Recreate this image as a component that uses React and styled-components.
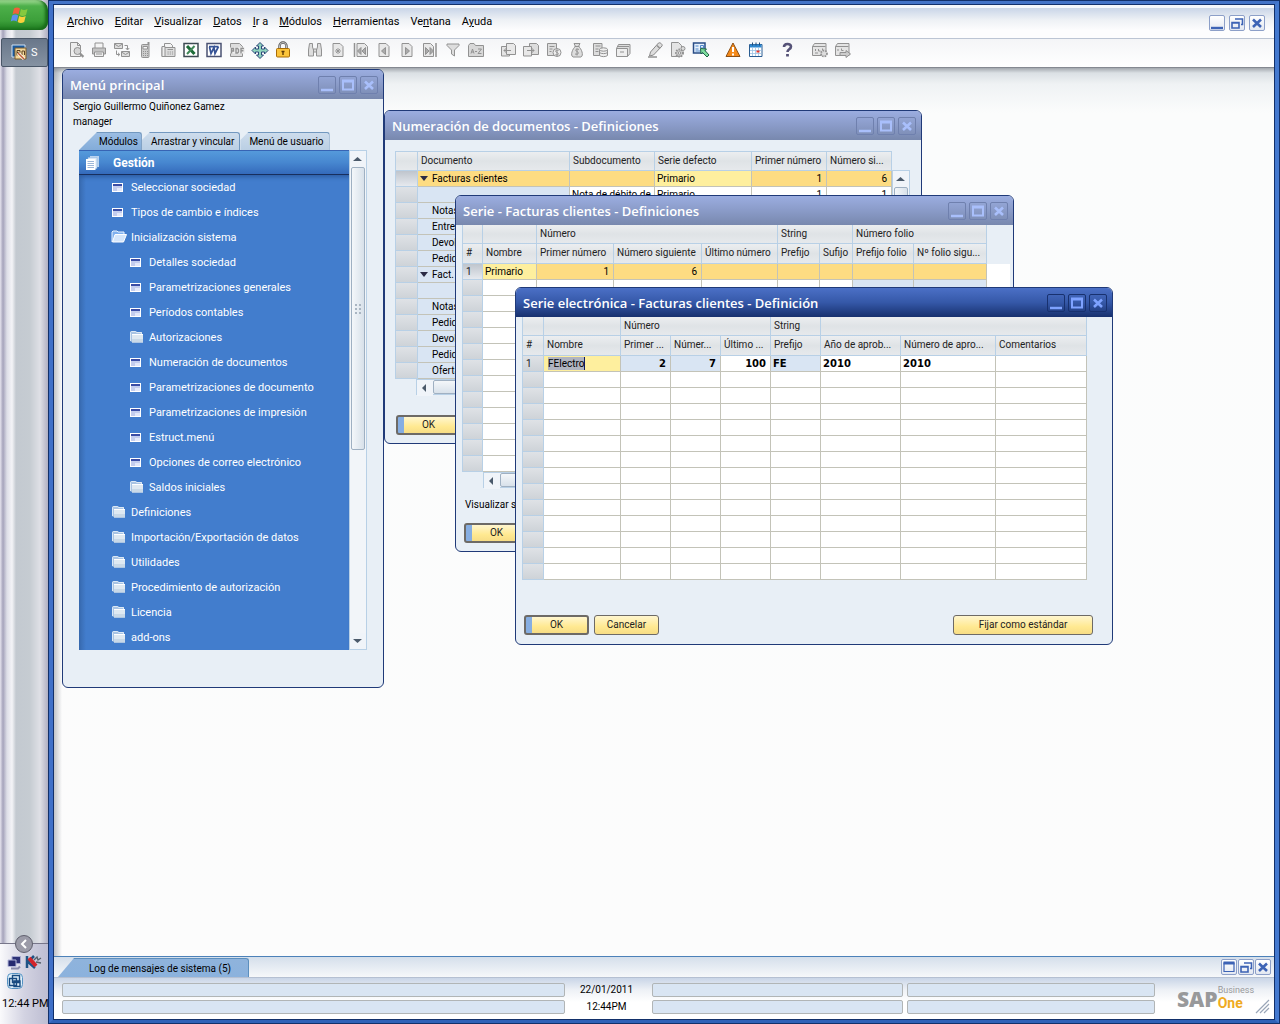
import React,{useState} from 'react'
import styled,{createGlobalStyle,css} from 'styled-components'

const ui='Roboto,"Noto Sans",sans-serif'

//menu bar, u is the index of the underlined letter
const menus=[
    {text:"Archivo",u:0},
    {text:"Editar",u:0},
    {text:"Visualizar",u:0},
    {text:"Datos",u:0},
    {text:"Ir a",u:0},
    {text:"Módulos",u:0},
    {text:"Herramientas",u:0},
    {text:"Ventana",u:2},
    {text:"Ayuda",u:1},
]

const toolGroups=[
    [["preview","Vista preliminar"],["print","Imprimir"],["mail","Correo"],["sms","SMS"],["fax","Fax"],["excel","Excel"],["word","Word"],["pdf","PDF"],["move","Iniciar aplicación"],["lock","Bloquear"]],
    [["find","Buscar"],["add","Crear"],["first","Primero"],["prev","Anterior"],["next","Siguiente"],["last","Último"],["filter","Filtrar"],["sort","Clasificar"]],
    [["base","Documento base"],["target","Documento destino"],["gross","Ganancia bruta"],["money","Medios de pago"],["volume","Volumen"],["drawer","Asiento"]],
    [["pencil","Editar"],["formset","Parametrizar formulario"],["query","Consultas"]],
    [["alert","Alertas"],["calendar","Calendario"]],
    [["help","Ayuda"]],
    [["layout","Diseño"],["layoutgo","Exportar diseño"]],
]

const tree=[
    {text:"Seleccionar sociedad",icon:"form",level:1},
    {text:"Tipos de cambio e índices",icon:"form",level:1},
    {text:"Inicialización sistema",icon:"open",level:1},
    {text:"Detalles sociedad",icon:"form",level:2},
    {text:"Parametrizaciones generales",icon:"form",level:2},
    {text:"Períodos contables",icon:"form",level:2},
    {text:"Autorizaciones",icon:"folder",level:2},
    {text:"Numeración de documentos",icon:"form",level:2},
    {text:"Parametrizaciones de documento",icon:"form",level:2},
    {text:"Parametrizaciones de impresión",icon:"form",level:2},
    {text:"Estruct.menú",icon:"form",level:2},
    {text:"Opciones de correo electrónico",icon:"form",level:2},
    {text:"Saldos iniciales",icon:"folder",level:2},
    {text:"Definiciones",icon:"folder",level:1},
    {text:"Importación/Exportación de datos",icon:"folder",level:1},
    {text:"Utilidades",icon:"folder",level:1},
    {text:"Procedimiento de autorización",icon:"folder",level:1},
    {text:"Licencia",icon:"folder",level:1},
    {text:"add-ons",icon:"folder",level:1},
]

const documents=["Notas","Entreg.","Devol.","Pedido","Fact.","","Notas","Pedido","Devol.","Pedido","Oferta"]

const blank=(n)=>Array.from({length:n},(_,i)=>i)

//---------- icons ----------
const page="M4 2.5h7l3 3v10h-10z"

const glyphs={
    preview:<><path d="M3.500 1.500h7l3 3v11h-10z" fill="#eee"/><path d="M10.500 1.500v3h3"/><circle cx="10.500" cy="10" r="3.500" fill="#d4d4d4"/><path d="M13 12.500l3.400 3.400" strokeWidth="2.200"/></>,
    print:<><path d="M5 7V2h8V7"  fill="#f4f4f4"/><path d="M2.500 7h13v6h-13z" fill="#c4c4c4"/><path d="M4.500 11h9v4.500h-9z" fill="#eee"/><path d="M6 13h6"/></>,
    mail:<><path d="M1.500 2.500h8v5h-8zM8.500 10.500h8v5h-8z" fill="#ddd"/><path d="M1.500 3l4 2.500 4-2.500M8.500 11l4 2.500 4-2.500M11.500 4.500h3v4M12.800 7l1.700 2 1.700-2M3.500 9.500v4h3M5 11.800l1.800 1.700-1.800 1.700"/></>,
    sms:<><path d="M12.500 1v3" strokeWidth="2"/><rect x="5.500" y="3.500" width="7.500" height="13" rx="1" fill="#ccc"/><path d="M7 5.500h4.500v2.500h-4.500z" fill="#f6f6f6"/><path d="M7 10.500h5M7 12.500h5M7 14.500h5" strokeDasharray="1 1"/></>,
    fax:<><path d="M5.500 6v-3.500h6l2 2v2" fill="#f4f4f4"/><path d="M3 6.500h13v9h-13z" fill="#ddd"/><path d="M3 5.500h3v10h-3z" fill="#eee"/><path d="M8.500 8.500h5.500"/><path d="M8.500 11h6M8.500 13h6" strokeDasharray="1.200 1"/></>,
    excel:<><path d="M2 2.500h14v13h-14z" fill="#fff" stroke="#3c4a52" strokeWidth="1.500"/><path d="M5 5l7.500 8" stroke="#1c6b37" strokeWidth="3"/><path d="M12.500 5l-7.500 8" stroke="#3f8757" strokeWidth="2"/></>,
    word:<><path d="M2 2.500h14v13h-14z" fill="#fff" stroke="#4a5272" strokeWidth="1.500"/><path d="M4.500 6l1.500 6.500 3-6 1 6 3.500-7M4 5.700h9.500" stroke="#365395" strokeWidth="1.700"/></>,
    pdf:<><path d="M2.500 2.500h9l3 3v10h-12z" fill="#ddd"/><path d="M2 6.500h15v6h-15z" fill="#eee" stroke="none"/><path d="M3.500 12.500v-5h2v2.500h-2M8 7.500v4.500h1.500l1-1v-2.500l-1-1zM13 12.500v-5h3M13 9.800h2.500" strokeWidth="1.400"/></>,
    move:<><path d="M9 1.500l3.500 3.500h-2v3h3v-2l3.500 3.500-3.500 3.500v-2h-3v3h2l-3.500 3.500-3.500-3.500h2v-3h-3v2l-3.500-3.500 3.500-3.500v2h3v-3h-2z" fill="#8fd3bd" stroke="#2b4778"/></>,
    lock:<><path d="M5.500 8v-3a3.500 3.500 0 0 1 7 0v3" stroke="#555" strokeWidth="2.400"/><path d="M5.500 8v-3a3.500 3.500 0 0 1 7 0v3" stroke="#ddd" strokeWidth="0.800"/><rect x="2.500" y="7.500" width="13" height="8.500" rx="1" fill="#fcc43a" stroke="#a96c06"/><path d="M9 10v4M7.500 10.500h3" stroke="#5e3a05" strokeWidth="1.400"/></>,
    find:<><path d="M3.500 2.500h3v3.500l1 3v6h-5v-6zM11.500 2.500h3l1 6.500v6h-5v-6l1-3zM7.500 8h3v3h-3z" fill="#ddd"/></>,
    add:<><path d={page} fill="#e8e8e8"/><path d="M9 7v6M6 10h6M7 8l4 4M11 8l-4 4" strokeWidth="0.900"/></>,
    first:<><path d="M5 2.500h7.500l3 3v10h-10.500z" fill="#e8e8e8"/><path d="M2.500 2v14" strokeWidth="1.500"/><path d="M9 6.500v7l-3.500-3.500zM13.500 6.500v7l-3.500-3.500z" fill="#aaa"/></>,
    prev:<><path d={page} fill="#e8e8e8"/><path d="M10.500 6.500v7l-4-3.500z" fill="#aaa"/></>,
    next:<><path d={page} fill="#e8e8e8"/><path d="M7.500 6.500v7l4-3.500z" fill="#aaa"/></>,
    last:<><path d="M2.500 2.500h7l3 3v10h-10z" fill="#e8e8e8"/><path d="M15 2v14" strokeWidth="1.500"/><path d="M4.500 6.500v7l3.500-3.500zM9 6.500v7l3.500-3.500z" fill="#aaa"/></>,
    filter:<path d="M3 3h12v1.500l-4.500 4.500v6l-3-2v-4l-4.500-4.500z" fill="#ddd"/>,
    sort:<><path d="M1.500 15.500v-11l1.500-2h4l1.500 2h8v11z" fill="#d8d8d8"/><path d="M4 12.500l1.500-4.500 1.500 4.500M4.500 11h2M8 10.500h2M11 8h3.500l-3.500 4.500h3.500"/></>,
    base:<><path d="M2.500 5.500h8v9.500h-8z" fill="#e4e4e4"/><path d="M7.500 2.500h7l2 2v9h-9z" fill="#e8e8e8"/><path d="M12 9.500h-7M7.500 7l-2.500 2.500 2.500 2.500"/></>,
    target:<><path d="M7.500 2.500h7l2 2v9h-9z" fill="#ddd"/><path d="M1.500 5.500h8v9.500h-8z" fill="#e8e8e8"/><path d="M5 9.500h7M9.500 7l2.500 2.500-2.500 2.500"/></>,
    gross:<><path d="M2.500 2.500h9v12h-9z" fill="#ddd"/><path d="M4.500 5.500h5M4.500 8h3M4.500 10.500h2"/><circle cx="12" cy="11.500" r="4" fill="#eee"/><path d="M13.500 9.500c-3-1-4 1-1.500 2s1.500 3-1.500 2M12 8.500v6.500"/></>,
    money:<><path d="M6 2.500h6l-1.500 3c3 2 5.500 9 2.500 10.500h-8c-3-1.500-.5-8.500 2.500-10.500z" fill="#ddd"/><path d="M11 8.500c-3-1.500-4.500 1-2 2s1.500 3.500-2 2.500M9 7.500v7M6.500 5.500h5"/></>,
    volume:<><path d="M2.500 2.500h8.500v12h-8.500z" fill="#ddd"/><path d="M4.500 5h5M4.500 8h3M4.500 10.500h3"/><path d="M8.500 8.500v6c1.500 1.500 6.500 1.500 8 0v-6" fill="#eee"/><ellipse cx="12.500" cy="8.500" rx="4" ry="1.700" fill="#eee"/><path d="M8.500 11.500c1.500 1.500 6.500 1.500 8 0"/></>,
    drawer:<><path d="M2.500 7.500l2-4h11.500v9l-2.500 3z" fill="#ddd"/><path d="M2.500 7.500h11v8h-11z" fill="#eee"/><path d="M4 5.500h11M6 11h4"/></>,
    pencil:<><path d="M4.500 11l8-9c1.500-1 4.500 1.500 3.500 3l-8.500 9-4 1z" fill="#ddd" stroke="#888"/><path d="M11 4.500l3 3M2 16h9" strokeWidth="1.500"/></>,
    formset:<><path d="M2.500 1.500h7l3 3v11h-10z" fill="#e4e4e4"/><circle cx="10.500" cy="12" r="3.500" fill="#ccc" strokeDasharray="1.500 1" strokeWidth="2"/><circle cx="10.500" cy="12" r="1.200" fill="#fff"/><circle cx="14" cy="7.500" r="2" fill="#ddd"/></>,
    query:<><path d="M1.500 2h11.500v10h-11.500z" fill="#e6f0fb" stroke="#294c86" strokeWidth="1.500"/><path d="M3.500 5h3M3.500 8h3M3.500 10h5M8.500 4.500h3v2.500h-3z" stroke="#4f86c9"/><path d="M8.500 7.500l6 .5-1.500 1.500 4 4.500-2 2-4.500-4.500-1.500 1.500z" fill="#7ddb9d" stroke="#1f6545"/></>,
    alert:<><path d="M9 2l7 13.500h-14z" fill="#f58a1a" stroke="#8a4e15"/><path d="M9 6v5" stroke="#fff" strokeWidth="2"/><path d="M9 12.500v2" stroke="#fff" strokeWidth="2"/></>,
    calendar:<><path d="M2.500 3.500h12.500v12h-12.500z" fill="#fff" stroke="#2a5d92"/><path d="M3 5h11.500" stroke="#2d87cf" strokeWidth="3"/><path d="M5.500 1.500v3M9 1.500v3M12.500 1.500v3" stroke="#234d78"/><path d="M3 9.500h11.500M3 12.500h11.500M5.500 7v8M8.500 7v8M11.500 7v8" stroke="#9cc3e4" strokeWidth="0.800"/><path d="M9.500 9.500h3v2h-3z" fill="#e5352b" stroke="none"/></>,
    help:<><path d="M5 6c0-4 7-4 7-.5 0 3-3.500 2.500-3.500 5.500" stroke="#555277" strokeWidth="2.600"/><path d="M8.500 13v2.500" stroke="#555277" strokeWidth="2.800"/></>,
    layout:<><path d="M1.500 5.500l2-3h11.500v12h-13.500z" fill="#e4e4e4"/><path d="M1.500 5.500h13M4.500 8v2M4 12h3M7.500 8v2h2M11.500 7.500v2"/><circle cx="13" cy="12.500" r="3" fill="#ddd" strokeWidth="1.800" strokeDasharray="1.500 1"/></>,
    layoutgo:<><path d="M1.500 5.500l2-3h11.500v12h-13.500z" fill="#e4e4e4"/><path d="M1.500 5.500h13M4 8v2M7.500 7.500v2h2"/><path d="M6 11.500h6v-2l4.500 3.500-4.500 3.500v-2h-6z" fill="#ccc"/></>,
}

function Glyph({name}){
    return(
        <svg width="18" height="18" viewBox="0 0 18 18" fill="none" stroke="#929292" strokeWidth="1" aria-hidden="true">
            {glyphs[name]}
        </svg>
    )
}

//minimize, maximize, restore and close marks
function Mark({name}){
    return(
        <svg width="14" height="14" viewBox="0 0 14 14" fill="none" stroke="currentColor" strokeWidth="2" aria-hidden="true">
            {name==="min"&&<path d="M1 12h12" strokeWidth="2.400"/>}
            {name==="max"&&<><path d="M2 3h10v8.500h-10z"/><path d="M1 3h12" strokeWidth="3"/></>}
            {name==="thin"&&<><path d="M2 3h10v8.500h-10z" strokeWidth="1.200"/><path d="M1.500 3h11" strokeWidth="3"/></>}
            {name==="restore"&&<><path d="M5 3h7.500v5.500h-1.500" strokeWidth="1.600"/><path d="M2 6.500h7v5.500h-7zM2 7h7" strokeWidth="1.600"/></>}
            {name==="close"&&<path d="M3 3.500l8 7.500M11 3.500l-8 7.500" strokeWidth="2.600"/>}
        </svg>
    )
}

function TreeIcon({name}){
    if(name==="form"){
        return(
            <svg width="16" height="14" viewBox="0 0 16 14" aria-hidden="true">
                <path d="M1 3h11v9h-11z" fill="#fff"/>
                <path d="M2 4h9v2h-9z" fill="#3a4da6"/>
                <path d="M2 6h9v5h-9z" fill="#c3cdee"/>
                <path d="M6 8h5v3h-5z" fill="#e3e8fa"/>
            </svg>
        )
    }
    if(name==="open"){
        return(
            <svg width="16" height="14" viewBox="0 0 16 14" aria-hidden="true">
                <path d="M1 12v-10l1-1h4l1 1h6v2" fill="#7fb0ef" stroke="#e9f3ff"/>
                <path d="M4 4.500h11.500l-3 7.500h-11z" fill="#d5e6fb" stroke="#fff"/>
            </svg>
        )
    }
    return(
        <svg width="16" height="14" viewBox="0 0 16 14" aria-hidden="true">
            <path d="M1 11v-9l1-1h5l1 1h5v3h-10v7z" fill="#a9c4e4"/>
            <path d="M1.500 11v-8.500l1-1h4l1 1h5v2" fill="none" stroke="#dbe8f5"/>
            <path d="M3 4h11v8.500h-11z" fill="#dfe9f2"/>
            <path d="M3 9h11v3.500h-11z" fill="#c9d9e8"/>
            <path d="M3 4h11v1h-11z" fill="#fff"/>
        </svg>
    )
}

function PagesIcon(){
    return(
        <svg width="16" height="16" viewBox="0 0 16 16" aria-hidden="true">
            <path d="M5 1h9v11h-9z" fill="#b9d3f0"/>
            <path d="M3 2.500h9v11h-9z" fill="#d9e7f6" stroke="#8fb4de" strokeWidth="0.500"/>
            <path d="M1 4h9.500v11h-9.500z" fill="#fff"/>
            <path d="M2.500 6.500h6.500M2.500 8.500h6.500M2.500 10.500h6.500M2.500 12.500h6.500" stroke="#9db7d8"/>
        </svg>
    )
}

function Arrow({dir}){
    const d={up:"M3 10h9l-4.500-4z",down:"M3 6h9l-4.500 4z",left:"M9 4v8l-4-4z"}[dir]
    return(
        <svg width="16" height="16" viewBox="0 0 16 16" aria-hidden="true"><path d={d} fill="#4b5a6b"/></svg>
    )
}

//---------- pieces ----------
function MenuLabel({text,u}){
    return <>{text.slice(0,u)}<u>{text[u]}</u>{text.slice(u+1)}</>
}

function Win({title,active,x,y,w,children}){
    return(
        <WinBox aria-label={title} $x={x} $y={y} $w={w}>
            <TitleBar $active={active}>
                <h2>{title}</h2>
                <TitleButton $active={active} aria-label="Minimizar"><Mark name="min"/></TitleButton>
                <TitleButton $active={active} aria-label="Maximizar"><Mark name="max"/></TitleButton>
                <TitleButton $active={active} aria-label="Cerrar"><Mark name="close"/></TitleButton>
            </TitleBar>
            {children}
        </WinBox>
    )
}

function Cols({widths}){
    return <colgroup>{widths.map((w,i)=><col key={i} width={w}/>)}</colgroup>
}

//empty lines that fill the rest of a grid
function EmptyRows({count,cells,tones={}}){
    return blank(count).map((r)=>(
        <tr key={r}>
            <RowHead/>
            {blank(cells).map((c)=><Cell key={c} $tone={tones[c]}/>)}
        </tr>
    ))
}

function MainMenu(){
    const [tab,setTab]=useState(0)
    return(
        <Win title="Menú principal" x={8} y={1} w={322}>
            <MenuBody>
                <UserInfo>
                    <span>Sergio Guillermo Quiñonez Gamez</span>
                    <span>manager</span>
                </UserInfo>
                <Tabs>
                    {["Módulos","Arrastrar y vincular","Menú de usuario"].map((t,i)=>(
                        <Tab key={t} $on={tab===i} onClick={()=>setTab(i)}>{t}</Tab>
                    ))}
                </Tabs>
                <TreePanel>
                    <TreeList>
                        <TreeHead><PagesIcon/>Gestión</TreeHead>
                        <ul>
                            {tree.map((t)=>(
                                <TreeItem key={t.text} $level={t.level}>
                                    <a href="#"><TreeIcon name={t.icon}/>{t.text}</a>
                                </TreeItem>
                            ))}
                        </ul>
                    </TreeList>
                    <VScroll>
                        <ScrollButton aria-label="Subir"><Arrow dir="up"/></ScrollButton>
                        <Thumb><i/><i/><i/><i/><i/><i/></Thumb>
                        <ScrollButton aria-label="Bajar"><Arrow dir="down"/></ScrollButton>
                    </VScroll>
                </TreePanel>
            </MenuBody>
        </Win>
    )
}

function DocumentNumbering(){
    return(
        <Win title="Numeración de documentos - Definiciones" x={330} y={42} w={538}>
            <DocBody>
                <GridLine>
                    <Grid $w={497} $topLine>
                        <Cols widths={[22,152,85,97,75,65]}/>
                        <thead>
                            <tr>
                                <HeadCell/>
                                <HeadCell>Documento</HeadCell>
                                <HeadCell>Subdocumento</HeadCell>
                                <HeadCell>Serie defecto</HeadCell>
                                <HeadCell>Primer número</HeadCell>
                                <HeadCell>Número si...</HeadCell>
                            </tr>
                        </thead>
                        <tbody>
                            <tr>
                                <RowHead $on/>
                                <Cell $tone="gold"><Branch>Facturas clientes</Branch></Cell>
                                <Cell $tone="gold"/>
                                <Cell $tone="edit">Primario</Cell>
                                <Cell $tone="gold" $num>1</Cell>
                                <Cell $tone="gold" $num>6</Cell>
                            </tr>
                            <tr>
                                <RowHead/>
                                <Cell $tone="blue"/>
                                <Cell>Nota de débito de</Cell>
                                <Cell>Primario</Cell>
                                <Cell $num>1</Cell>
                                <Cell $num>1</Cell>
                            </tr>
                            {documents.map((d,i)=>(
                                <tr key={i}>
                                    <RowHead/>
                                    <Cell $tone="blue">{d==="Fact."?<Branch>{d}</Branch>:<Leaf>{d}</Leaf>}</Cell>
                                    <Cell $tone="blue"/>
                                    <Cell/>
                                    <Cell/>
                                    <Cell/>
                                </tr>
                            ))}
                        </tbody>
                    </Grid>
                    <VScroll $drop>
                        <ScrollButton aria-label="Subir"><Arrow dir="up"/></ScrollButton>
                        <Thumb/>
                    </VScroll>
                </GridLine>
                <HScroll>
                    <ScrollButton aria-label="Izquierda"><Arrow dir="left"/></ScrollButton>
                    <HThumb/>
                </HScroll>
                <Actions>
                    <Button $main>OK</Button>
                </Actions>
            </DocBody>
        </Win>
    )
}

function SeriesWindow(){
    return(
        <Win title="Serie - Facturas clientes - Definiciones" x={401} y={127} w={559}>
            <SeriesBody>
                <GridBack>
                    <Grid $w={525}>
                        <Cols widths={[20,54,77,88,76,42,33,61,73]}/>
                        <thead>
                            <tr>
                                <HeadCell/>
                                <HeadCell/>
                                <HeadCell colSpan={3}>Número</HeadCell>
                                <HeadCell colSpan={2}>String</HeadCell>
                                <HeadCell colSpan={2}>Número folio</HeadCell>
                            </tr>
                            <tr>
                                {["#","Nombre","Primer número","Número siguiente","Último número","Prefijo","Sufijo","Prefijo folio","Nº folio sigu..."].map((h)=>(
                                    <HeadCell key={h} $low>{h}</HeadCell>
                                ))}
                            </tr>
                        </thead>
                        <tbody>
                            <tr>
                                <RowHead $on>1</RowHead>
                                <Cell $tone="edit">Primario</Cell>
                                <Cell $tone="gold" $num>1</Cell>
                                <Cell $tone="gold" $num>6</Cell>
                                {blank(5).map((c)=><Cell key={c} $tone="gold"/>)}
                            </tr>
                            <EmptyRows count={12} cells={8} tones={{6:"blue",7:"blue"}}/>
                        </tbody>
                    </Grid>
                </GridBack>
                <HScroll>
                    <ScrollButton aria-label="Izquierda"><Arrow dir="left"/></ScrollButton>
                    <HThumb/>
                </HScroll>
                <Note>Visualizar series</Note>
                <Actions>
                    <Button $main>OK</Button>
                </Actions>
            </SeriesBody>
        </Win>
    )
}

function ElectronicSeries(){
    const [name,setName]=useState("FElectro")
    return(
        <Win title="Serie electrónica - Facturas clientes - Definición" active x={461} y={219} w={598}>
            <ElectronicBody>
                <Grid $w={565}>
                    <Cols widths={[21,77,50,50,50,50,80,95,91]}/>
                    <thead>
                        <tr>
                            <HeadCell/>
                            <HeadCell/>
                            <HeadCell colSpan={3}>Número</HeadCell>
                            <HeadCell>String</HeadCell>
                            <HeadCell colSpan={3}/>
                        </tr>
                        <tr>
                            {["#","Nombre","Primer ...","Númer...","Último ...","Prefijo","Año de aprob...","Número de apro...","Comentarios"].map((h)=>(
                                <HeadCell key={h} $low>{h}</HeadCell>
                            ))}
                        </tr>
                    </thead>
                    <tbody>
                        <tr>
                            <RowHead>1</RowHead>
                            <Cell $tone="edit"><NameInput aria-label="Nombre" value={name} onChange={(e)=>setName(e.target.value)}/></Cell>
                            <Cell $tone="blue" $num $bold>2</Cell>
                            <Cell $tone="blue" $num $bold>7</Cell>
                            <Cell $num $bold>100</Cell>
                            <Cell $tone="blue" $bold>FE</Cell>
                            <Cell $bold>2010</Cell>
                            <Cell $bold>2010</Cell>
                            <Cell/>
                        </tr>
                        <EmptyRows count={13} cells={8}/>
                    </tbody>
                </Grid>
                <Actions>
                    <Button $main>OK</Button>
                    <Button>Cancelar</Button>
                    <Button $wide>Fijar como estándar</Button>
                </Actions>
            </ElectronicBody>
        </Win>
    )
}

function Taskbar(){
    return(
        <Side>
            <Start aria-label="Inicio">
                <svg width="22" height="20" viewBox="0 0 22 20" aria-hidden="true">
                    <path d="M5 3.500c2-1.500 4-1.500 6 0l-1.500 6c-2-1.300-4-1.300-6 0z" fill="#f0603a"/>
                    <path d="M12 4c2 1.300 4 1.300 6.500 0l-1.500 6c-2.500 1.300-4.500 1.300-6.500 0z" fill="#86c93f"/>
                    <path d="M3.200 10.500c2-1.300 4-1.300 6 0l-1.500 6c-2-1.300-4-1.300-6 0z" fill="#5c90ee"/>
                    <path d="M10.200 11c2 1.300 4 1.300 6.500 0l-1.500 6c-2.500 1.300-4.500 1.300-6.500 0z" fill="#fbd03c"/>
                </svg>
            </Start>
            <Task>
                <svg width="17" height="17" viewBox="0 0 17 17" aria-hidden="true">
                    <path d="M1 1h13v12h-13z" fill="#1c5a9c" stroke="#cfe2f5"/>
                    <path d="M4 4h11v11h-11z" fill="#f3d79a" stroke="#7a5a2a"/>
                    <path d="M6 8.500h3v-2h-3v5M11 11v-4h2.500v4" stroke="#5a4020" fill="none"/>
                    <path d="M7 9l6 6" stroke="#fff" strokeWidth="3"/>
                    <path d="M7 9l6 6" stroke="#c05a30" strokeWidth="1.500"/>
                </svg>
                S
            </Task>
            <Tray>
                <Collapse aria-label="Mostrar iconos">
                    <svg width="10" height="10" viewBox="0 0 10 10" aria-hidden="true"><path d="M7 1l-4 4 4 4" fill="none" stroke="#fff" strokeWidth="2"/></svg>
                </Collapse>
                <TrayIcons>
                    <svg width="15" height="15" viewBox="0 0 15 15" aria-hidden="true">
                        <path d="M5 1.500h8.500v7h-8.500z" fill="#2d3277" stroke="#a6a9cf"/>
                        <path d="M1 5h8v6.500h-8z" fill="#252a70" stroke="#b5b8da"/>
                        <path d="M4 13.500h7l2-2" stroke="#8a8cac" strokeWidth="2" fill="none"/>
                    </svg>
                    <svg width="17" height="15" viewBox="0 0 17 15" aria-hidden="true">
                        <path d="M2 1v12M9 1l-6 6 7 6" stroke="#1f5486" strokeWidth="2.500" fill="none"/>
                        <path d="M4 3l7 8" stroke="#d3232a" strokeWidth="4" fill="none"/>
                        <path d="M9 5l3-3 1 3 3-2M11 7l5 1" stroke="#55606a" fill="none" strokeWidth="1.300"/>
                    </svg>
                    <svg width="16" height="16" viewBox="0 0 16 16" aria-hidden="true">
                        <rect x="0.500" y="0.500" width="15" height="15" rx="4" fill="#dff0fb" stroke="#5592c2"/>
                        <path d="M5.500 2.500h7v7h-7zM2.500 5.500h7v7h-7zM7 8h6v5.500h-6z" fill="none" stroke="#174a80" strokeWidth="1.400"/>
                    </svg>
                </TrayIcons>
                <Clock>12:44 PM</Clock>
            </Tray>
        </Side>
    )
}

function App(){
    return(
        <>
        <Global/>
        <Desktop>
            <Taskbar/>
            <Frame>
                <MenuBar>
                    <nav>
                        {menus.map((m)=><MenuButton key={m.text}><MenuLabel {...m}/></MenuButton>)}
                    </nav>
                    <FrameButtons>
                        <FrameButton aria-label="Minimizar"><Mark name="min"/></FrameButton>
                        <FrameButton aria-label="Restaurar"><Mark name="restore"/></FrameButton>
                        <FrameButton aria-label="Cerrar"><Mark name="close"/></FrameButton>
                    </FrameButtons>
                </MenuBar>
                <ToolBar>
                    {toolGroups.map((g,i)=>(
                        <ToolGroup key={i}>
                            {g.map(([name,label])=><Tool key={name} aria-label={label}><Glyph name={name}/></Tool>)}
                        </ToolGroup>
                    ))}
                </ToolBar>
                <Workspace>
                    <MainMenu/>
                    <DocumentNumbering/>
                    <SeriesWindow/>
                    <ElectronicSeries/>
                </Workspace>
                <LogBar>
                    <LogTab>Log de mensajes de sistema (5)</LogTab>
                    <FrameButtons>
                        <FrameButton aria-label="Maximizar"><Mark name="thin"/></FrameButton>
                        <FrameButton aria-label="Restaurar"><Mark name="restore"/></FrameButton>
                        <FrameButton aria-label="Cerrar"><Mark name="close"/></FrameButton>
                    </FrameButtons>
                </LogBar>
                <Status>
                    <Fields><Field/><Field/></Fields>
                    <Stamp><span>22/01/2011</span><span>12:44PM</span></Stamp>
                    <Fields><Field/><Field/></Fields>
                    <Fields><Field/><Field/></Fields>
                    <Brand>
                        <b>SAP</b>
                        <div><span>Business</span><strong>One</strong></div>
                        <svg width="15" height="15" viewBox="0 0 15 15" aria-hidden="true"><path d="M1 14l13-13M5 14l9-9M9 14l5-5" stroke="#9aa6b8" strokeWidth="1.200"/></svg>
                    </Brand>
                </Status>
            </Frame>
        </Desktop>
        </>
    )
}

//---------- styles ----------
const Global=createGlobalStyle`
*{box-sizing:border-box;}
body{
    margin:0;
    font-family:${ui};
    font-size:10px;
    color:#000;
}
button{
    font-family:inherit;
    font-size:inherit;
    color:inherit;
    padding:0;
    border:none;
    background:none;
}
ul{
    list-style:none;
    margin:0;
    padding:0;
}
`
const Desktop=styled.div`
display:flex;
height:100vh;
overflow:hidden;
`
const Side=styled.aside`
width:48px;
display:flex;
flex-direction:column;
background:linear-gradient(90deg,#e6e4ee 0,#a5a3bb 3px,#dedfe8 7px,#f4f4f7 12px,#c3c9d0 16px,#c6ccd2 30px,#dfe0e6 40px,#b0afc2 48px);
`
const Start=styled.button`
height:30px;
display:flex;
align-items:center;
padding-left:9px;
border-radius:0 10px 8px 0;
background:linear-gradient(#a3dc96,#4db04a 20%,#3c9f3a 70%,#1d7a1e);
box-shadow:inset -3px -1px 3px #186a1a;
`
const Task=styled.button`
margin:8px 0 0 1px;
height:29px;
display:flex;
align-items:center;
gap:3px;
padding-left:9px;
color:#fff;
font-size:11px;
border:1px solid #4a5768;
border-radius:2px;
background:linear-gradient(#69778a,#8592a2);
`
const Tray=styled.div`
margin-top:auto;
height:81px;
display:flex;
flex-direction:column;
border-top:1px solid #77768a;
background:linear-gradient(90deg,#fafafc,#d3d3e2 50%,#bdbdd2);
`
const Collapse=styled.button`
width:18px;
height:18px;
margin:-9px 0 0 15px;
display:flex;
align-items:center;
justify-content:center;
border:1px solid #60606e;
border-radius:50%;
background:#9b9ba8;
`
const TrayIcons=styled.div`
display:flex;
flex-wrap:wrap;
gap:3px;
padding:2px 0 0 7px;
`
const Clock=styled.span`
margin:auto 0 13px 2px;
font-size:11px;
line-height:14px;
white-space:nowrap;
`
const Frame=styled.main`
flex:1;
min-width:0;
display:flex;
flex-direction:column;
padding:1px;
border:4px solid;
border-left-width:5px;
border-right-width:5px;
border-color:#4273c8 #4479cf #2f62b8 #3f70c8;
background:#12306a;
outline:1px solid #12306a;
outline-offset:-1px;
`
const MenuBar=styled.header`
height:34px;
display:flex;
justify-content:space-between;
align-items:center;
padding:0 9px 0 13px;
border-top:3px solid #f3f6fb;
border-bottom:1px solid #bcc5d4;
background:linear-gradient(#c9d5e8,#eef1f5 40%,#fdfdfe 75%);
nav{
    display:flex;
    gap:11px;
    padding-bottom:2px;
}
`
const MenuButton=styled.button`
font-size:11px;
line-height:16px;
white-space:nowrap;
`
const FrameButtons=styled.div`
display:flex;
gap:4px;
`
const FrameButton=styled.button`
width:16px;
height:16px;
display:flex;
align-items:center;
justify-content:center;
color:#3d63b5;
border:1px solid #8c9fc8;
border-radius:2px;
background:linear-gradient(#fff,#e3e8f1);
`
const ToolBar=styled.div`
height:29px;
display:flex;
gap:9px;
padding:1px 0 0 10px;
border-bottom:1px solid #858991;
background:linear-gradient(#f4f5f7,#fff);
`
const ToolGroup=styled.div`
display:flex;
`
const Tool=styled.button`
width:23px;
height:20px;
display:flex;
align-items:center;
justify-content:center;
`
const Workspace=styled.section`
flex:1;
min-height:0;
position:relative;
overflow:hidden;
background:linear-gradient(90deg,rgba(120,125,135,.45),rgba(255,255,255,0) 8px),linear-gradient(#a3a8ae,#dbe0e4 5px,#eff2f4 16px,#fbfcfc 45px,#fcfcfc);
`
//the windows float freely over the workspace
const WinBox=styled.section`
position:absolute;
left:${props=>props.$x}px;
top:${props=>props.$y}px;
width:${props=>props.$w}px;
border:1px solid #203a78;
border-radius:6px;
background:#e8eff6;
overflow:hidden;
`
const TitleBar=styled.header`
height:29px;
display:flex;
align-items:center;
gap:3px;
margin:0 -1px;
padding:0 6px 0 8px;
color:#fff;
background:${props=>props.$active?"linear-gradient(#4b70c6,#3558a8 50%,#17306e)":"linear-gradient(#9bade0,#8a9bc8 50%,#7888ae)"};
h2{
    flex:1;
    margin:0;
    font-family:"Open Sans","Noto Sans",sans-serif;
    font-size:13px;
    font-weight:600;
    line-height:18px;
    white-space:nowrap;
}
`
const TitleButton=styled.button`
width:18px;
height:18px;
display:flex;
align-items:center;
justify-content:center;
color:${props=>props.$active?"#7ea2ff":"#a9bffb"};
border:1px solid ${props=>props.$active?"#18316f":"#6f80ae"};
border-radius:2px;
`
const MenuBody=styled.div`
padding:0 16px 37px;
`
const UserInfo=styled.div`
display:flex;
flex-direction:column;
margin-left:-6px;
line-height:15px;
`
const Tabs=styled.div`
display:flex;
align-items:flex-end;
padding-top:3px;
`
const Tab=styled.button`
height:18px;
padding:0 ${props=>props.$on?"3px 0 20px":"5px 0 9px"};
white-space:nowrap;
background:${props=>props.$on?"linear-gradient(#9bbde3,#83acd9)":"linear-gradient(#cddcec,#bacfe4)"};
border-top:1px solid #7298bf;
border-right:1px solid #7298bf;
border-radius:0 3px 0 0;
clip-path:polygon(${props=>props.$on?18:8}px 0,100% 0,100% 100%,0 100%,0 ${props=>props.$on?"100%":"8px"});
`
const TreePanel=styled.div`
display:flex;
width:288px;
`
const TreeList=styled.div`
flex:1;
color:#fff;
background:linear-gradient(90deg,#3769ae,#427dcd 7px);
ul{
    box-shadow:inset 0 5px 4px -3px #2d5da3;
}
`
const TreeHead=styled.h3`
height:25px;
margin:0;
display:flex;
align-items:center;
gap:12px;
padding-left:6px;
font-size:12px;
line-height:16px;
border-top:1px solid #3764b4;
border-bottom:1px solid #182f5e;
background:linear-gradient(#559adb,#4787d0 50%,#346abb);
`
const TreeItem=styled.li`
height:25px;
padding-left:${props=>props.$level===2?50:32}px;
a{
    height:24px;
    display:flex;
    align-items:center;
    gap:4px;
    color:#fff;
    font-size:11px;
    text-decoration:none;
    white-space:nowrap;
}
`
const VScroll=styled.div`
width:18px;
display:flex;
flex-direction:column;
margin-top:${props=>props.$drop?19:0}px;
border:1px solid #b8d0e6;
background:#f2f5f9;
overflow:hidden;
>:last-child{
    margin-top:auto;
}
>div:last-child{
    flex:1;
    margin-top:0;
}
`
const ScrollButton=styled.button`
width:16px;
height:16px;
flex:none;
background:#f0f4f9;
`
const Thumb=styled.div`
height:283px;
margin:0 1px;
display:grid;
grid-template-columns:2px 2px;
gap:2px;
place-content:center;
border:1px solid #9fb0c2;
border-radius:2px;
background:linear-gradient(90deg,#f4f7fa,#d8e1ea);
i{
    width:2px;
    height:2px;
    background:#a9b5c2;
}
`
const HScroll=styled.div`
height:16px;
display:flex;
margin:0 21px;
border:1px solid #b8d0e6;
background:#f2f5f9;
`
const HThumb=styled.div`
flex:1;
border:1px solid #9fb0c2;
border-radius:2px;
background:linear-gradient(#f4f7fa,#d8e1ea);
`
const DocBody=styled.div`
padding:11px 10px 8px;
`
const SeriesBody=styled.div`
padding:0 3px 8px 6px;
`
const ElectronicBody=styled.div`
padding:0 0 9px 6px;
`
const GridLine=styled.div`
display:flex;
`
const GridBack=styled.div`
background:linear-gradient(#e8eff6,#e8eff6) 0 0/100% 39px no-repeat,#fff;
`
const Grid=styled.table`
width:${props=>props.$w}px;
table-layout:fixed;
border-collapse:separate;
border-spacing:0;
border-left:1px solid #b8d0e6;
border-top:${props=>props.$topLine?"1px solid #b8d0e6":"none"};
`
const cellBase=css`
padding:0 0 0 3px;
font-weight:400;
text-align:left;
white-space:nowrap;
overflow:hidden;
`
const HeadCell=styled.th`
${cellBase}
height:${props=>props.$low?20:19}px;
padding-bottom:1px;
line-height:14px;
color:#222;
border-right:1px solid #b8d0e6;
border-bottom:1px solid #b8d0e6;
background:linear-gradient(#eceef0,#dfe3e6 50%,#e6e9ec);
`
const RowHead=styled.th`
${cellBase}
height:16px;
color:#222;
line-height:14px;
border-right:1px solid #b8d0e6;
border-bottom:1px solid #b8d0e6;
background:${props=>props.$on?"linear-gradient(#bfc5cd,#e6e9ee)":"linear-gradient(#dfe2e6,#ced3d8)"};
`
const tones={gold:"#fddc82",edit:"#feef9e",blue:"#d9e5f3"}
const Cell=styled.td`
${cellBase}
padding:0 4px 0 2px;
height:16px;
line-height:14px;
border-right:1px solid #c3c3b8;
border-bottom:1px solid #c3c3b8;
background:${props=>tones[props.$tone]||"#fff"};
text-align:${props=>props.$num?"right":"left"};
${props=>props.$bold&&css`
font-family:"DejaVu Sans",sans-serif;
font-weight:700;
`}
`
const Leaf=styled.span`
padding-left:12px;
`
const Branch=styled.span`
display:flex;
align-items:center;
gap:4px;
&:before{
    content:"";
    border:4px solid transparent;
    border-top:5px solid #2b2b45;
    border-bottom:none;
}
`
const NameInput=styled.input`
display:block;
field-sizing:content;
height:13px;
margin-left:2px;
padding:0;
font-family:inherit;
font-size:inherit;
border:none;
border-right:1px solid #101a60;
outline:none;
background:#b0b4c0;
`
const Note=styled.p`
margin:9px 0 10px 3px;
line-height:16px;
`
const Actions=styled.div`
display:flex;
gap:5px;
padding:0 19px 0 2px;
${DocBody} &{
    margin-top:20px;
    padding-left:1px;
}
${ElectronicBody} &{
    margin-top:35px;
}
`
const Button=styled.button`
width:${props=>props.$wide?140:65}px;
height:20px;
padding-bottom:1px;
color:#222;
border:1px solid #6d6a66;
border-radius:3px;
background:linear-gradient(#fff6cf,#ffe991 60%,#f7dd85);
${props=>props.$main&&css`
border-width:2px;
background:linear-gradient(90deg,#86aee2 6px,transparent 6px),linear-gradient(#fff6cf,#ffe991 60%,#f7dd85);
`}
${props=>props.$wide&&css`
margin-left:auto;
`}
`
const LogBar=styled.div`
height:22px;
display:flex;
justify-content:space-between;
align-items:center;
padding:0 3px 0 4px;
border-top:1px solid #4c81b9;
border-bottom:1px solid #b5c0d2;
background:linear-gradient(#d5dfeb,#f6f8fa);
${FrameButtons}{
    gap:1px;
}
`
const LogTab=styled.button`
align-self:flex-end;
width:191px;
height:19px;
padding:1px 0 0 14px;
border-top:1px solid #5c8fbe;
border-right:1px solid #5c8fbe;
border-radius:0 3px 0 0;
background:linear-gradient(#8fb3dc,#8bb2dd);
clip-path:polygon(16px 0,100% 0,100% 100%,0 100%);
`
const Status=styled.footer`
height:41px;
display:grid;
grid-template-columns:503fr 87px 251fr 4px 248fr 119px;
padding:5px 0 5px 8px;
background:linear-gradient(#c9d5e7,#eef1f6 12px,#fff 24px);
>:nth-child(4){
    grid-column:5;
}
`
const Fields=styled.div`
display:grid;
gap:3px;
`
const Field=styled.div`
border:1px solid #b1b5b6;
border-radius:2px;
background:#d9e5f3;
`
const Stamp=styled.div`
display:flex;
flex-direction:column;
justify-content:space-between;
align-items:center;
line-height:14px;
padding-right:4px;
`
const Brand=styled.div`
display:flex;
align-items:center;
padding-left:22px;
color:#98999b;
b{
    font-family:"Open Sans",sans-serif;
    font-size:21px;
    font-weight:800;
    line-height:24px;
}
div{
    display:flex;
    flex-direction:column;
    font-size:9px;
    line-height:9px;
}
strong{
    color:#efab22;
    font-size:14px;
    line-height:16px;
}
svg{
    align-self:flex-end;
    margin-left:auto;
    margin-right:4px;
}
`

export default App;
